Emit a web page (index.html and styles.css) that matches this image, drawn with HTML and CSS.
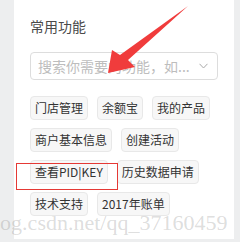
FILE: index.html
```html
<!DOCTYPE html>
<html lang="zh">
<head>
<meta charset="utf-8">
<link rel="stylesheet" href="styles.css">
</head>
<body>
<div class="page">
  <section class="panel">
    <h3 class="title">常用功能</h3>
    <div class="search">
      <span class="placeholder">搜索你需要的功能，如...</span>
      <svg class="chevron" width="9" height="6" viewBox="0 0 9 6"><path d="M0.5 0.8 L4.5 5 L8.5 0.8" fill="none" stroke="#a9a9a9" stroke-width="1"/></svg>
    </div>
    <div class="tags">
      <span class="tag">门店管理</span>
      <span class="tag">余额宝</span>
      <span class="tag">我的产品</span>
      <span class="tag">商户基本信息</span>
      <span class="tag">创建活动</span>
      <span class="tag">查看PID|KEY</span>
      <span class="tag">历史数据申请</span>
      <span class="tag">技术支持</span>
      <span class="tag">2017年账单</span>
    </div>
  </section>
  <div class="highlight"></div>
  <svg class="arrow" width="240" height="242" viewBox="0 0 240 242">
    <polygon points="188,6 128,60 135,67 108,73 112,50 120,55" fill="#f03c3c"/>
  </svg>
  <div class="watermark">blog.csdn.net/qq_37160459</div>
</div>
</body>
</html>
```

FILE: styles.css
```css
html, body {
  margin: 0;
  padding: 0;
}
body {
  background: #edeeef;
  width: 240px;
  height: 242px;
  overflow: hidden;
  font-family: "Noto Sans CJK SC", "Noto Sans", sans-serif;
}
.page {
  position: relative;
  width: 240px;
  height: 242px;
}
.panel {
  margin-left: 14px;
  width: 220px;
  height: 239px;
  box-sizing: border-box;
  padding: 16px 16px 0 16px;
  background: #ffffff;
}
.title {
  margin: 0;
  font-size: 14px;
  font-weight: normal;
  line-height: 21px;
  color: #4a4a4a;
}
.search {
  margin-top: 15px;
  height: 28px;
  box-sizing: border-box;
  border: 1px solid #dddddd;
  border-radius: 4px;
  display: flex;
  align-items: center;
  justify-content: space-between;
  padding: 0 9px 0 7px;
}
.placeholder {
  font-size: 14px;
  line-height: 20px;
  color: #bdbdbd;
  white-space: nowrap;
}
.chevron {
  display: block;
}
.tags {
  margin-top: 16px;
  display: flex;
  flex-wrap: wrap;
  gap: 8px 9px;
}
.tag {
  height: 24px;
  box-sizing: border-box;
  line-height: 22px;
  padding: 0 4px;
  border: 1px solid #e8e8e8;
  border-radius: 4px;
  background: #f7f7f7;
  font-size: 12px;
  color: #333;
  white-space: nowrap;
}
.highlight {
  position: absolute;
  left: 16px;
  top: 163px;
  width: 102px;
  height: 27px;
  box-sizing: border-box;
  border: 1px solid #e53935;
}
.arrow {
  position: absolute;
  left: 0;
  top: 0;
}
.watermark {
  position: absolute;
  left: -17px;
  top: 210px;
  font-family: "Liberation Serif", serif;
  font-size: 22px;
  line-height: 25px;
  color: rgba(110, 110, 110, 0.24);
  white-space: nowrap;
}
```
